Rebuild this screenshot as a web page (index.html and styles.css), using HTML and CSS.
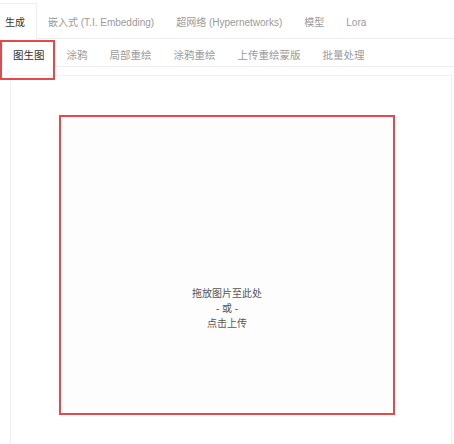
FILE: index.html
```html
<!DOCTYPE html>
<html lang="zh">
<head>
<meta charset="utf-8">
<link rel="stylesheet" href="styles.css">
</head>
<body>
<div class="page">
  <nav class="top-tabs">
    <div class="tab active">生成</div>
    <div class="tab">嵌入式 (T.I. Embedding)</div>
    <div class="tab">超网络 (Hypernetworks)</div>
    <div class="tab">模型</div>
    <div class="tab">Lora</div>
  </nav>
  <nav class="sub-tabs">
    <div class="subtab active">图生图</div>
    <div class="subtab">涂鸦</div>
    <div class="subtab">局部重绘</div>
    <div class="subtab">涂鸦重绘</div>
    <div class="subtab">上传重绘蒙版</div>
    <div class="subtab">批量处理</div>
  </nav>
  <section class="panel">
    <div class="dropzone">
      <span>拖放图片至此处</span>
      <span>- 或 -</span>
      <span>点击上传</span>
    </div>
  </section>
</div>
</body>
</html>
```

FILE: styles.css
```css
* { box-sizing: border-box; }
html, body {
  margin: 0;
  padding: 0;
  background: #ffffff;
}
body {
  font-family: "Liberation Sans", "Noto Sans CJK SC", sans-serif;
  color: #444;
  width: 454px;
  height: 444px;
  overflow: hidden;
}
.page {
  display: flex;
  flex-direction: column;
  height: 444px;
}
.top-tabs {
  display: flex;
  height: 39px;
  border-bottom: 1px solid #eceef1;
  margin-left: -8px;
}
.tab {
  padding: 0 10px;
  font-size: 10px;
  line-height: 37px;
  margin-top: 3px;
  color: #9a9a9a;
  border: 1px solid transparent;
  border-bottom: none;
  white-space: nowrap;
}
.tab.active {
  color: #333;
  border-color: #eceef1;
  background: #fff;
  margin-bottom: -1px;
  padding: 0 11px 0 12px;
}
.sub-tabs {
  display: flex;
  height: 28px;
  border-bottom: 1px solid #eceef1;
  padding-left: 2px;
}
.subtab {
  padding: 0 10px;
  font-size: 10.5px;
  line-height: 27px;
  margin-top: 2px;
  color: #9a9a9a;
  white-space: nowrap;
  border: 1px solid transparent;
  border-bottom: none;
}
.subtab.active {
  position: relative;
  color: #333;
  border-color: #eceef1;
  margin-bottom: -1px;
  background: #fff;
}
.subtab.active::after {
  content: "";
  position: absolute;
  left: -3px;
  top: -2px;
  width: 51px;
  height: 36px;
  border: 2px solid #e8484a;
}
.panel {
  flex: 1;
  margin: 8px 2px 0 10px;
  border: 1px solid #eff0f2;
  border-bottom: none;
  padding: 39px 0 0 48px;
}
.dropzone {
  width: 336px;
  height: 300px;
  border: 2px solid #e8484a;
  background: #fdfdfd;
  display: flex;
  flex-direction: column;
  align-items: center;
  justify-content: center;
  padding-top: 86px;
  font-size: 10px;
  line-height: 15px;
  color: #555;
}
```
